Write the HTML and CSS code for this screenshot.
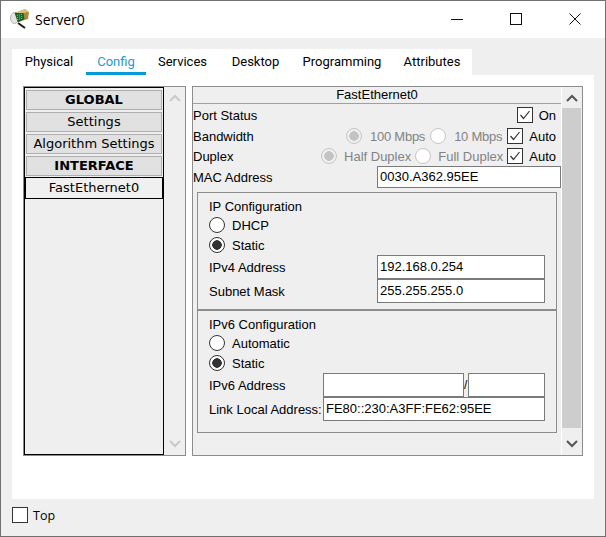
FILE: index.html
```html
<!DOCTYPE html>
<html lang="en">
<head>
    <meta charset="UTF-8">
    <title>Server0</title>
    <link rel="stylesheet" href="styles.css">
</head>
<body>

<div class="window">
    <div class="titlebar">
        <svg class="appIcon" width="20" height="20" viewBox="0 0 20 20">
            <ellipse cx="4.5" cy="9" rx="4" ry="5.5" fill="#e6e6e6" stroke="#b5b5b5"/>
            <path d="M8 14l7 5" stroke="#1a1a1a" stroke-width="2" fill="none"/>
            <path d="M5 4l10-4 4 3-1 7-10 3z" fill="#a58b3b"/>
            <path d="M5 4l8-1 1 7-6 3z" fill="#146b2a" stroke="#3d3a1c" stroke-width=".6"/>
            <path d="M5 4l10-4 4 3-6 1z" fill="#d9c27c"/>
            <path d="M7.500 6v5M9.500 5.500v5M11.500 5v5" stroke="#62c862" stroke-dasharray="1 1"/>
        </svg>
        <span class="title">Server0</span>
        <div class="winButtons">
            <svg width="12" height="12" viewBox="0 0 12 12"><path d="M0 6.500h12" stroke="#111"/></svg>
            <svg width="12" height="12" viewBox="0 0 12 12"><rect x=".5" y=".5" width="11" height="11" fill="none" stroke="#111"/></svg>
            <svg width="12" height="12" viewBox="0 0 12 12"><path d="M.5.5l11 11M11.500.5l-11 11" stroke="#111"/></svg>
        </div>
    </div>

    <div class="main">
        <div class="tabs">
            <div class="tab">Physical</div>
            <div class="tab active">Config</div>
            <div class="tab">Services</div>
            <div class="tab">Desktop</div>
            <div class="tab">Programming</div>
            <div class="tab">Attributes</div>
        </div>

        <div class="page">
            <div class="sidebar">
                <div class="list">
                    <div class="listItem bold">GLOBAL</div>
                    <div class="listItem">Settings</div>
                    <div class="listItem">Algorithm Settings</div>
                    <div class="listItem bold">INTERFACE</div>
                    <div class="listItem selected">FastEthernet0</div>
                </div>
                <div class="scrollbar">
                    <svg class="arrow" width="12" height="8" viewBox="0 0 12 8"><path d="M1 7l5-5 5 5" fill="none" stroke="#c9c9c9" stroke-width="2"/></svg>
                    <svg class="arrow" width="12" height="8" viewBox="0 0 12 8"><path d="M1 1l5 5 5-5" fill="none" stroke="#c9c9c9" stroke-width="2"/></svg>
                </div>
            </div>

            <div class="panel">
                <div class="panelBody">
                    <div class="panelHead">FastEthernet0</div>

                    <div class="row statusRow">
                        <span>Port Status</span>
                        <div class="controls">
                            <span class="check on"></span><span>On</span>
                        </div>
                    </div>
                    <div class="row">
                        <span>Bandwidth</span>
                        <div class="controls">
                            <span class="radio disabled on"></span><span class="off speed">100 Mbps</span>
                            <span class="radio disabled"></span><span class="off speed">10 Mbps</span>
                            <span class="check on"></span><span>Auto</span>
                        </div>
                    </div>
                    <div class="row">
                        <span>Duplex</span>
                        <div class="controls">
                            <span class="radio disabled on"></span><span class="off duplex">Half Duplex</span>
                            <span class="radio disabled"></span><span class="off duplex">Full Duplex</span>
                            <span class="check on"></span><span>Auto</span>
                        </div>
                    </div>
                    <div class="row macRow">
                        <span>MAC Address</span>
                        <div class="field macField">0030.A362.95EE</div>
                    </div>

                    <div class="groups">
                        <div class="group ipv4">
                            <div class="groupTitle">IP Configuration</div>
                            <div class="choice"><span class="radio"></span>DHCP</div>
                            <div class="choice"><span class="radio on"></span>Static</div>
                            <div class="fieldRow">
                                <span>IPv4 Address</span>
                                <div class="field wide">192.168.0.254</div>
                            </div>
                            <div class="fieldRow">
                                <span>Subnet Mask</span>
                                <div class="field wide">255.255.255.0</div>
                            </div>
                        </div>
                        <div class="group ipv6">
                            <div class="groupTitle">IPv6 Configuration</div>
                            <div class="choice"><span class="radio"></span>Automatic</div>
                            <div class="choice"><span class="radio on"></span>Static</div>
                            <div class="fieldRow">
                                <span>IPv6 Address</span>
                                <div class="addressPair">
                                    <div class="field address"></div>
                                    <span class="slash">/</span>
                                    <div class="field prefix"></div>
                                </div>
                            </div>
                            <div class="fieldRow">
                                <span>Link Local Address:</span>
                                <div class="field linkLocal">FE80::230:A3FF:FE62:95EE</div>
                            </div>
                        </div>
                    </div>
                </div>
                <div class="scrollbar panelScroll">
                    <svg class="arrow" width="12" height="8" viewBox="0 0 12 8"><path d="M1 7l5-5 5 5" fill="none" stroke="#555" stroke-width="2"/></svg>
                    <div class="thumb"></div>
                    <svg class="arrow" width="12" height="8" viewBox="0 0 12 8"><path d="M1 1l5 5 5-5" fill="none" stroke="#555" stroke-width="2"/></svg>
                </div>
            </div>
        </div>
    </div>

    <div class="footer">
        <span class="check"></span><span>Top</span>
    </div>
</div>

</body>
</html>
```

FILE: styles.css
```css
* {
    box-sizing: border-box;
}

html, body {
    margin: 0;
    padding: 0;
}

body {
    width: 606px;
    height: 537px;
    overflow: hidden;
    color: #000000;
    font-family: "Liberation Sans", Arial, sans-serif;
    font-size: 13px;
}

.window {
    width: 606px;
    height: 537px;
    display: flex;
    flex-direction: column;
    background: #efefef;
    border: solid 1px #707070;
}

.titlebar {
    height: 37px;
    flex: none;
    display: flex;
    align-items: center;
    background: white;
    padding-left: 9px;
}

.appIcon {
    margin-top: -2px;
}

.title {
    margin-left: 5px;
    font-family: "Open Sans", sans-serif;
    font-size: 14px;
    margin-top: -1px;
}

.winButtons {
    margin-left: auto;
    display: flex;
    gap: 47px;
    padding-right: 24px;
    margin-top: -1px;
}

.main {
    margin: 11px 11px 0 11px;
    height: 450px;
    flex: none;
    display: flex;
    flex-direction: column;
}

.tabs {
    height: 26px;
    width: 460px;
    flex: none;
    display: grid;
    grid-template-columns: 74px 60px 73px 73px 100px 80px;
    background: white;
    font-family: Roboto, sans-serif;
    font-size: 13px;
}

.tab {
    padding-top: 5px;
    height: 26px;
    text-align: center;
    white-space: nowrap;
}

.tab.active {
    color: #1e9ad6;
    border-bottom: solid 3px #069bd8;
}

.page {
    flex: 1;
    background: white;
    display: flex;
    gap: 6px;
    padding: 11px 0 0 11px;
}

.sidebar {
    width: 163px;
    height: 370px;
    display: flex;
    border: solid 1px #8c8c8c;
    background: #efefef;
}

.list {
    width: 140px;
    border: solid 1px black;
    padding-top: 2px;
    font-family: "DejaVu Sans", sans-serif;
    font-size: 13px;
    display: flex;
    flex-direction: column;
}

.listItem {
    height: 20px;
    margin: 0 1px 2px 1px;
    background: #e1e1e1;
    border: solid 1px #adadad;
    text-align: center;
    line-height: 18px;
    white-space: nowrap;
}

.listItem.bold {
    font-weight: bold;
}

.listItem.selected {
    height: 22px;
    margin: -1px 0 0 0;
    background: #f0f0f0;
    border: solid 1px black;
    line-height: 20px;
}

.scrollbar {
    flex: none;
    width: 21px;
    display: flex;
    flex-direction: column;
    align-items: center;
    justify-content: space-between;
    padding: 7px 0 7px 0;
}

.panel {
    width: 391px;
    height: 370px;
    display: flex;
    border: solid 1px #8c8c8c;
    background: #efefef;
}

.panelBody {
    flex: 1;
    min-width: 0;
}

.panelHead {
    height: 17px;
    text-align: center;
    line-height: 16px;
    border-bottom: solid 1px #a0a0a0;
}

.panelScroll {
    border-left: solid 1px #ffffff;
    justify-content: flex-start;
}

.thumb {
    align-self: stretch;
    height: 320px;
    margin: 6px 1px 12px 0;
    background: #cdcdcd;
}

.row {
    height: 20px;
    display: flex;
    align-items: center;
    justify-content: space-between;
    white-space: nowrap;
}

.statusRow {
    margin-top: 1px;
    margin-bottom: 1px;
}

.controls {
    display: flex;
    align-items: center;
    padding-right: 5px;
}

.macRow {
    height: 22px;
}

.off {
    color: #838383;
}

.speed {
    margin: 0 5px 0 8px;
    letter-spacing: -0.25px;
}

.duplex {
    margin: 0 4px 0 7px;
}

.radio {
    display: inline-block;
    flex: none;
    width: 16px;
    height: 16px;
    border-radius: 50%;
    border: solid 1px #333333;
    background: white;
}

.radio.on {
    background: radial-gradient(circle, #333333 0, #333333 4.500px, #ffffff 5px);
}

.radio.disabled {
    border-color: #c6c6c6;
}

.radio.disabled.on {
    background: radial-gradient(circle, #c4c4c4 0, #c4c4c4 4.500px, #efefef 5px);
}

.check {
    display: inline-block;
    flex: none;
    width: 16px;
    height: 16px;
    margin-right: 6px;
    border: solid 1px #333333;
    background: white;
}

.check.on {
    background: white url("data:image/svg+xml,%3Csvg xmlns='http://www.w3.org/2000/svg' width='14' height='14'%3E%3Cpath d='M2.500 7l3 3.500 6-7.500' fill='none' stroke='%23333' stroke-width='1.200'/%3E%3C/svg%3E") no-repeat center;
}

.field {
    flex: none;
    height: 24px;
    line-height: 22px;
    background: white;
    border: solid 1px #7a7a7a;
    padding-left: 2px;
    white-space: nowrap;
}

.macField {
    width: 184px;
    height: 22px;
    line-height: 20px;
}

.groups {
    margin: 4px 0 0 4px;
    width: 360px;
}

.group {
    border: solid 1px #8c8c8c;
    padding: 6px 0 0 11px;
}

.ipv4 {
    height: 119px;
    border-bottom-width: 2px;
}

.ipv6 {
    height: 122px;
    border-top-width: 0;
}

.groupTitle {
    height: 16px;
    line-height: 16px;
}

.choice {
    height: 20px;
    display: flex;
    align-items: center;
    gap: 7px;
}

.fieldRow {
    height: 24px;
    display: flex;
    align-items: center;
    justify-content: space-between;
    padding-right: 11px;
    white-space: nowrap;
}

.wide {
    width: 168px;
}

.addressPair {
    display: flex;
    align-items: center;
}

.address {
    width: 141px;
}

.prefix {
    width: 77px;
}

.slash {
    width: 4px;
    font-size: 12px;
}

.linkLocal {
    width: 222px;
}

.footer {
    flex: 1;
    display: flex;
    align-items: flex-start;
    padding: 8px 0 0 11px;
    font-family: "Open Sans", sans-serif;
    font-size: 12.500px;
}

.footer .check {
    margin-right: 5px;
}
```
